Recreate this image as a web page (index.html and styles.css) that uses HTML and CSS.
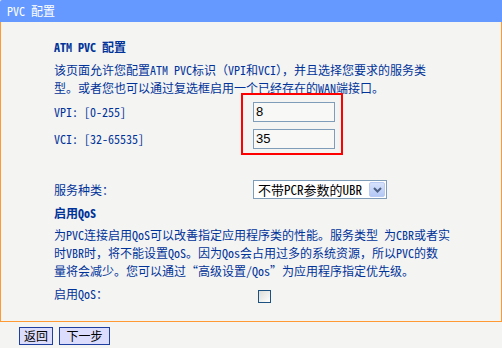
FILE: index.html
```html
<!DOCTYPE html>
<html lang="zh-CN">
<head>
<meta charset="utf-8">
<title>PVC 配置</title>
<link rel="stylesheet" href="styles.css">
</head>
<body>
<div class="titlebar">PVC 配置</div>
<div class="panel">
  <h1 class="heading">ATM PVC 配置</h1>
  <p class="para">该页面允许您配置ATM PVC标识（VPI和VCI），并且选择您要求的服务类<br>型。或者您也可以通过复选框启用一个已经存在的WAN端接口。</p>
  <div class="fields">
    <span class="label">VPI: [0-255]</span>
    <span class="input">8</span>
    <span class="label">VCI: [32-65535]</span>
    <span class="input">35</span>
    <div class="highlight"></div>
  </div>
  <div class="row service">
    <span class="label">服务种类：</span>
    <div class="select">
      <span class="select-text">不带PCR参数的UBR</span>
      <span class="select-btn"><svg width="9" height="6" viewBox="0 0 9 6"><path d="M1 1 L4.5 4.5 L8 1" fill="none" stroke="#4d6185" stroke-width="2"/></svg></span>
    </div>
  </div>
  <h2 class="heading sub">启用QoS</h2>
  <p class="para para2">为PVC连接启用QoS可以改善指定应用程序类的性能。服务类型 为CBR或者实<br>时VBR时，将不能设置QoS。因为Qos会占用过多的系统资源，所以PVC的数<br>量将会减少。您可以通过“高级设置/Qos”为应用程序指定优先级。</p>
  <div class="row qos">
    <span class="label">启用QoS：</span>
    <span class="checkbox"></span>
  </div>
</div>
<div class="footer">
  <button class="btn btn-back">返回</button>
  <button class="btn btn-next">下一步</button>
</div>
</body>
</html>
```
FILE: styles.css
```css
html, body {
  margin: 0;
  padding: 0;
}
body {
  width: 502px;
  height: 348px;
  overflow: hidden;
  background: #f4f4f2;
  font-family: "Noto Sans Mono CJK SC", "Noto Sans CJK SC", monospace;
  font-size: 12px;
  line-height: 18px;
  color: #003399;
}
.titlebar {
  height: 22px;
  line-height: 22px;
  background: #6699ff;
  color: #ffffff;
  padding-left: 7px;
  border-top-left-radius: 2px;
}
.panel {
  height: 299px;
  border-left: 1px solid #ff9933;
  border-right: 1px solid #ff9933;
  border-bottom: 1px solid #ff9933;
  padding-left: 53px;
  display: flex;
  flex-direction: column;
  align-items: flex-start;
}
.heading {
  margin: 16px 0 0 0;
  font-size: 12px;
  line-height: 18px;
  font-weight: bold;
  color: #003399;
}
.heading.sub {
  margin-top: 5px;
}
.para {
  margin: 5px 0 0 0;
  white-space: nowrap;
}
.para2 {
  margin-top: 4px;
}
.fields {
  position: relative;
  margin-top: 5px;
  display: grid;
  grid-template-columns: 199px 82px;
  grid-auto-rows: 20px;
  row-gap: 7px;
  align-items: center;
}
.fields .label {
  line-height: 20px;
}
.input {
  box-sizing: border-box;
  height: 20px;
  width: 82px;
  border: 1px solid #7f9db9;
  background: #f8f8f6;
  color: #000;
  font-family: "Liberation Sans", Arial, sans-serif;
  font-size: 13px;
  line-height: 18px;
  padding-left: 2px;
}
.highlight {
  position: absolute;
  left: 187px;
  top: -9px;
  width: 98px;
  height: 58px;
  border: 2px solid #ff0000;
  pointer-events: none;
}
.row {
  display: flex;
  align-items: center;
}
.service {
  margin-top: 31px;
  height: 19px;
}
.service .label {
  width: 199px;
}
.select {
  box-sizing: border-box;
  width: 134px;
  height: 19px;
  border: 1px solid #7f9db9;
  background: #ffffff;
  display: flex;
  align-items: center;
  justify-content: space-between;
  padding: 0 1px 0 4px;
}
.select-text {
  color: #000;
  font-size: 13px;
  line-height: 17px;
}
.select-btn {
  box-sizing: border-box;
  width: 16px;
  height: 15px;
  border: 1px solid #b9cbf3;
  border-radius: 2px;
  background: linear-gradient(#d6e2fc, #b4c8f6);
  display: flex;
  align-items: center;
  justify-content: center;
}
.qos {
  margin-top: 5px;
  height: 18px;
  align-items: flex-end;
}
.qos .label {
  width: 204px;
  line-height: 18px;
  align-self: flex-start;
}
.checkbox {
  box-sizing: border-box;
  width: 13px;
  height: 13px;
  border: 1px solid #1c5180;
  background: linear-gradient(135deg, #dcdcd7, #ffffff);
}
.footer {
  display: flex;
  gap: 6px;
  padding: 5px 0 0 19px;
}
.btn {
  box-sizing: border-box;
  height: 18px;
  padding: 0;
  margin: 0;
  border: 1px solid #1e3fa0;
  background: #dcdcfc;
  color: #000;
  font-family: "Noto Sans Mono CJK SC", "Noto Sans CJK SC", monospace;
  font-size: 12px;
  line-height: 16px;
}
.btn-back {
  width: 34px;
}
.btn-next {
  width: 51px;
}
```
